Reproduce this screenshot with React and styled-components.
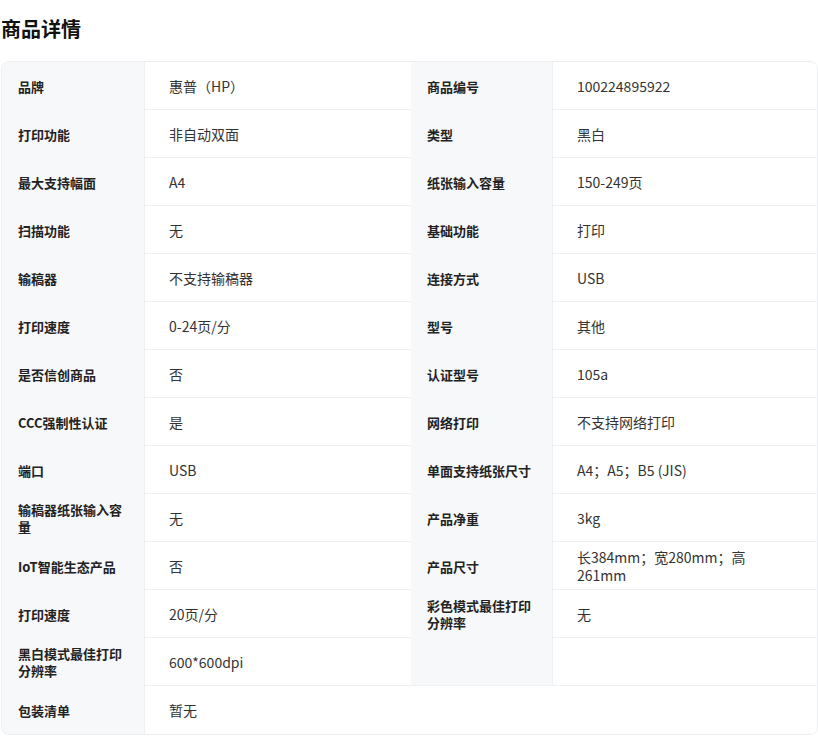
import React from "react";
import styled, { createGlobalStyle } from "styled-components";

const Global = createGlobalStyle`
  body { margin: 0; background: #fff; font-family: "Noto Sans CJK SC", "Noto Sans", sans-serif; }
`;

const Page = styled.div`
  padding: 14px 0 0 1px;
`;

const Title = styled.h2`
  margin: 0 0 17px 0;
  font-size: 20px;
  font-weight: 700;
  color: #111;
  line-height: 30px;
`;

const Card = styled.div`
  display: grid;
  grid-template-columns: 143px 266px 142px 1fr;
  border: 1px solid #eceef1;
  border-radius: 8px;
  overflow: hidden;
  height: 672px;
  grid-auto-rows: 48px;
`;

const Label = styled.div`
  background: #f7f8fa;
  padding: 0 14px 0 16px;
  display: flex;
  align-items: center;
  font-size: 13px;
  font-weight: 700;
  color: #222;
  line-height: 17px;
  border-right: 1px solid #eef0f2;
  ${(p) => p.$line && "border-bottom: 1px solid #eef0f2;"}
`;

const Value = styled.div`
  padding: 0 24px;
  display: flex;
  align-items: center;
  font-size: 14px;
  color: #333;
  line-height: 18px;
  border-bottom: 1px solid #eef0f2;
  grid-column: ${(p) => (p.$wide ? "span 3" : "auto")};
  ${(p) => p.$wide && "border-bottom: none;"}
`;

const rows = [
  ["品牌", "惠普（HP）", "商品编号", "100224895922"],
  ["打印功能", "非自动双面", "类型", "黑白"],
  ["最大支持幅面", "A4", "纸张输入容量", "150-249页"],
  ["扫描功能", "无", "基础功能", "打印"],
  ["输稿器", "不支持输稿器", "连接方式", "USB"],
  ["打印速度", "0-24页/分", "型号", "其他"],
  ["是否信创商品", "否", "认证型号", "105a"],
  ["CCC强制性认证", "是", "网络打印", "不支持网络打印"],
  ["端口", "USB", "单面支持纸张尺寸", "A4；A5；B5 (JIS)"],
  ["输稿器纸张输入容量", "无", "产品净重", "3kg"],
  ["IoT智能生态产品", "否", "产品尺寸", "长384mm；宽280mm；高261mm"],
  ["打印速度", "20页/分", "彩色模式最佳打印分辨率", "无"],
  ["黑白模式最佳打印分辨率", "600*600dpi", "", ""],
];

export default function App() {
  return (
    <Page>
      <Global />
      <Title>商品详情</Title>
      <Card>
        {rows.map((r, i) => (
          <React.Fragment key={i}>
            <Label>{r[0]}</Label>
            <Value>{r[1]}</Value>
            <Label $line={!r[2]}>{r[2]}</Label>
            <Value>{r[3]}</Value>
          </React.Fragment>
        ))}
        <Label>包装清单</Label>
        <Value $wide>暂无</Value>
      </Card>
    </Page>
  );
}
